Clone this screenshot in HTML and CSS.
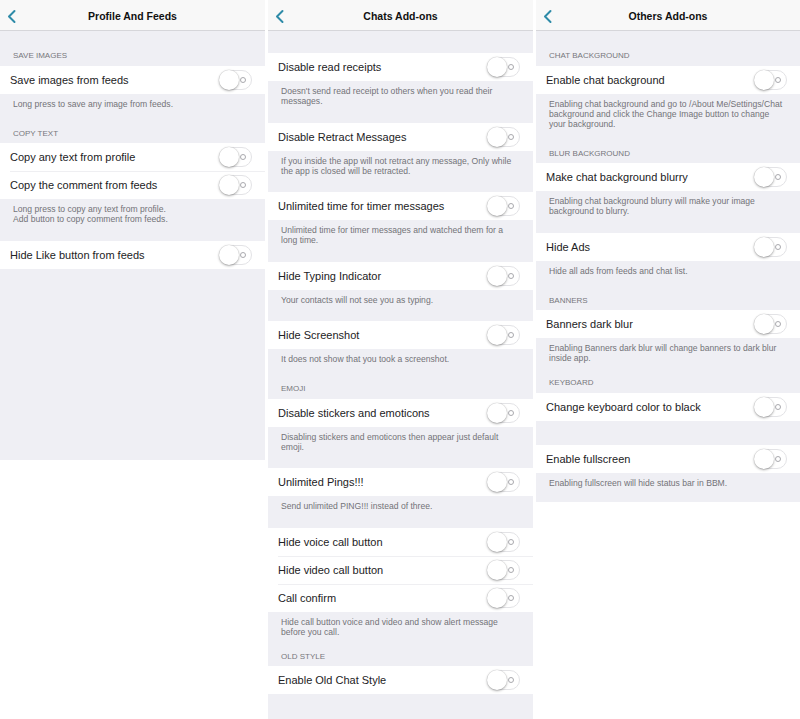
FILE: index.html
```html
<!DOCTYPE html>
<html lang="en">
<head>
<meta charset="utf-8">
<title>Add-ons settings</title>
<link rel="stylesheet" href="styles.css">
</head>
<body>
<div class="screens">

  <section class="panel p1">
    <header class="nav">
      <svg class="back" viewBox="0 0 30 30" width="30" height="30"><path d="M14.5 11 L9 16.5 L14.5 22"/></svg>
      <h1 class="title">Profile And Feeds</h1>
      <span></span>
    </header>
    <div class="content">
      <div class="sh">SAVE IMAGES</div>
      <div class="group">
        <div class="row"><span class="label">Save images from feeds</span><span class="switch"></span></div>
      </div>
      <p class="ft">Long press to save any image from feeds.</p>
      <div class="sh">COPY TEXT</div>
      <div class="group">
        <div class="row"><span class="label">Copy any text from profile</span><span class="switch"></span></div>
        <div class="row"><span class="label">Copy the comment from feeds</span><span class="switch"></span></div>
      </div>
      <p class="ft">Long press to copy any text from profile.<br>Add button to copy comment from feeds.</p>
      <div class="group">
        <div class="row"><span class="label">Hide Like button from feeds</span><span class="switch"></span></div>
      </div>
    </div>
  </section>

  <section class="panel p2">
    <header class="nav">
      <svg class="back" viewBox="0 0 30 30" width="30" height="30"><path d="M14.5 11 L9 16.5 L14.5 22"/></svg>
      <h1 class="title">Chats Add-ons</h1>
      <span></span>
    </header>
    <div class="content">
      <div class="group">
        <div class="row"><span class="label">Disable read receipts</span><span class="switch"></span></div>
      </div>
      <p class="ft">Doesn't send read receipt to others when you read their<br>messages.</p>
      <div class="group">
        <div class="row"><span class="label">Disable Retract Messages</span><span class="switch"></span></div>
      </div>
      <p class="ft">If you inside the app will not retract any message, Only while<br>the app is closed will be retracted.</p>
      <div class="group">
        <div class="row"><span class="label">Unlimited time for timer messages</span><span class="switch"></span></div>
      </div>
      <p class="ft">Unlimited time for timer messages and watched them for a<br>long time.</p>
      <div class="group">
        <div class="row"><span class="label">Hide Typing Indicator</span><span class="switch"></span></div>
      </div>
      <p class="ft">Your contacts will not see you as typing.</p>
      <div class="group">
        <div class="row"><span class="label">Hide Screenshot</span><span class="switch"></span></div>
      </div>
      <p class="ft">It does not show that you took a screenshot.</p>
      <div class="sh">EMOJI</div>
      <div class="group">
        <div class="row"><span class="label">Disable stickers and emoticons</span><span class="switch"></span></div>
      </div>
      <p class="ft">Disabling stickers and emoticons then appear just default<br>emoji.</p>
      <div class="group">
        <div class="row"><span class="label">Unlimited Pings!!!</span><span class="switch"></span></div>
      </div>
      <p class="ft">Send unlimited PING!!! instead of three.</p>
      <div class="group">
        <div class="row"><span class="label">Hide voice call button</span><span class="switch"></span></div>
        <div class="row"><span class="label">Hide video call button</span><span class="switch"></span></div>
        <div class="row"><span class="label">Call confirm</span><span class="switch"></span></div>
      </div>
      <p class="ft">Hide call button voice and video and show alert message<br>before you call.</p>
      <div class="sh tight">OLD STYLE</div>
      <div class="group">
        <div class="row"><span class="label">Enable Old Chat Style</span><span class="switch"></span></div>
      </div>
    </div>
  </section>

  <section class="panel p3">
    <header class="nav">
      <svg class="back" viewBox="0 0 30 30" width="30" height="30"><path d="M14.5 11 L9 16.5 L14.5 22"/></svg>
      <h1 class="title">Others Add-ons</h1>
      <span></span>
    </header>
    <div class="content">
      <div class="sh">CHAT BACKGROUND</div>
      <div class="group">
        <div class="row"><span class="label">Enable chat background</span><span class="switch"></span></div>
      </div>
      <p class="ft">Enabling chat background and go to /About Me/Settings/Chat<br>background and click the Change Image button to change<br>your background.</p>
      <div class="sh">BLUR BACKGROUND</div>
      <div class="group">
        <div class="row"><span class="label">Make chat background blurry</span><span class="switch"></span></div>
      </div>
      <p class="ft">Enabling chat background blurry will make your image<br>background to blurry.</p>
      <div class="group">
        <div class="row"><span class="label">Hide Ads</span><span class="switch"></span></div>
      </div>
      <p class="ft">Hide all ads from feeds and chat list.</p>
      <div class="sh">BANNERS</div>
      <div class="group">
        <div class="row"><span class="label">Banners dark blur</span><span class="switch"></span></div>
      </div>
      <p class="ft">Enabling Banners dark blur will change banners to dark blur<br>inside app.</p>
      <div class="sh tight">KEYBOARD</div>
      <div class="group">
        <div class="row"><span class="label">Change keyboard color to black</span><span class="switch"></span></div>
      </div>
      <div class="group">
        <div class="row"><span class="label">Enable fullscreen</span><span class="switch"></span></div>
      </div>
      <p class="ft">Enabling fullscreen will hide status bar in BBM.</p>
    </div>
  </section>

</div>
</body>
</html>
```

FILE: styles.css
```css
html, body {
  margin: 0;
  padding: 0;
  background: #ffffff;
  overflow: hidden;
}

body {
  font-family: "Liberation Sans", Arial, sans-serif;
  color: #1c1c1e;
}

.screens {
  display: flex;
  align-items: flex-start;
  gap: 3px;
  width: 800px;
}

.panel {
  flex: 0 0 265px;
  display: flex;
  flex-direction: column;
}

.panel.p3 {
  flex-basis: 264px;
}

.nav {
  height: 30px;
  border-bottom: 1px solid #d6d6da;
  background: #f8f8f8;
  display: grid;
  grid-template-columns: 30px 1fr 30px;
  align-items: center;
}

.back {
  display: block;
}

.back path {
  fill: none;
  stroke: #2e8ba8;
  stroke-width: 2;
  stroke-linecap: round;
  stroke-linejoin: round;
}

.title {
  margin: 0;
  padding-top: 2px;
  text-align: center;
  font-size: 10.5px;
  font-weight: bold;
  color: #111111;
  line-height: 14px;
}

.content {
  background: #efeff4;
}

.p1 .content {
  padding-bottom: 191px;
}

.p2 .content {
  padding-bottom: 25px;
}

.p3 .content {
  padding-bottom: 14.5px;
}

.sh {
  padding: 20px 13px 4.5px;
  font-size: 8px;
  line-height: 10px;
  color: #77777c;
}

.sh.tight {
  padding-top: 15px;
}

.p2 .content > .group:first-child {
  margin-top: 22px;
}

.ft + .group {
  margin-top: 16.5px;
}

.group + .group {
  margin-top: 24px;
}

.group {
  background: #ffffff;
}

.row {
  position: relative;
  height: 28px;
  display: flex;
  align-items: center;
  justify-content: space-between;
  padding: 0 13px 0 10px;
}

.row + .row::before {
  content: "";
  position: absolute;
  left: 10px;
  right: 0;
  top: 0;
  height: 1px;
  background: #efeff2;
}

.label {
  font-size: 11px;
  line-height: 14px;
  color: #222224;
}

.switch {
  position: relative;
  flex: 0 0 auto;
  box-sizing: border-box;
  width: 33px;
  height: 20px;
  border-radius: 10px;
  border: 1px solid #e3e3e6;
  background: #ffffff;
}

.switch::before {
  content: "";
  position: absolute;
  left: -1px;
  top: -1px;
  width: 20px;
  height: 20px;
  border-radius: 50%;
  background: #ffffff;
  box-shadow: 0 1px 2.5px rgba(0, 0, 0, 0.33), 0 0 0 0.5px rgba(0, 0, 0, 0.08);
}

.switch::after {
  content: "";
  position: absolute;
  right: 5px;
  top: 6px;
  width: 4px;
  height: 4px;
  border-radius: 50%;
  border: 1px solid #a9a9ae;
}

.ft {
  margin: 0;
  padding: 5px 0 0 13px;
  font-size: 8.6px;
  line-height: 10px;
  color: #737378;
  white-space: nowrap;
}
```
